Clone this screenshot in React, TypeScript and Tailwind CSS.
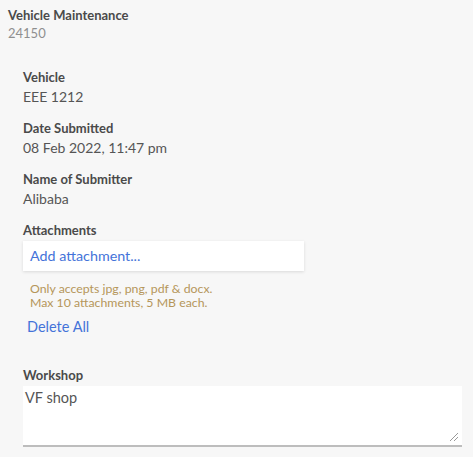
import React from 'react';

const fields = [
  { label: 'Vehicle', value: 'EEE 1212' },
  { label: 'Date Submitted', value: '08 Feb 2022, 11:47 pm' },
  { label: 'Name of Submitter', value: 'Alibaba' },
];

export default function App() {
  return (
    <div className="min-h-[457px] w-[473px] bg-[#f7f7f7] font-['Lato',sans-serif] text-[#444]">
      {/* Header */}
      <div className="px-[8px] pt-[6px]">
        <div className="text-[13px] font-bold leading-[18px] text-[#4a4a4a]">Vehicle Maintenance</div>
        <div className="text-[13px] leading-[18px] text-[#8f8f8f]">24150</div>
      </div>

      <div className="pl-[23px] pr-[11px] pt-[26px]">
        {fields.map((f, i) => (
          <div key={i} className="mb-[12px]">
            <div className="text-[13px] font-bold leading-[18px] text-[#4a4a4a]">{f.label}</div>
            <div className="text-[14px] leading-[21px] text-[#555]">{f.value}</div>
          </div>
        ))}

        {/* Attachments */}
        <div className="text-[13px] font-bold leading-[18px] text-[#4a4a4a]">Attachments</div>
        <div className="mt-[2px] flex h-[30px] w-[281px] items-center bg-white px-[7px] shadow-[0_1px_3px_rgba(0,0,0,0.12)]">
          <span className="text-[14.3px] text-[#4473d9]">Add attachment...</span>
        </div>
        <div className="mt-[11px] pl-[7px] text-[12.3px] leading-[14px] text-[#b5965a]">
          <div>Only accepts jpg, png, pdf &amp; docx.</div>
          <div>Max 10 attachments, 5 MB each.</div>
        </div>
        <div className="mt-[7px] pl-[4px] text-[14.5px] leading-[20px] text-[#4473d9]">Delete All</div>

        {/* Workshop */}
        <div className="mt-[29px] text-[13px] font-bold leading-[18px] text-[#4a4a4a]">Workshop</div>
        <div className="relative mt-[2px] h-[61px] w-[439px] border-b-2 border-[#bdbdbd] bg-white px-[2px] pt-[2px]">
          <div className="text-[14.5px] leading-[20px] text-[#555]">VF shop</div>
          <svg className="absolute bottom-[3px] right-[3px]" width="10" height="10" viewBox="0 0 10 10">
            <path d="M9 1 L1 9 M9 5 L5 9" stroke="#999" strokeWidth="1" fill="none" />
          </svg>
        </div>
      </div>
    </div>
  );
}
